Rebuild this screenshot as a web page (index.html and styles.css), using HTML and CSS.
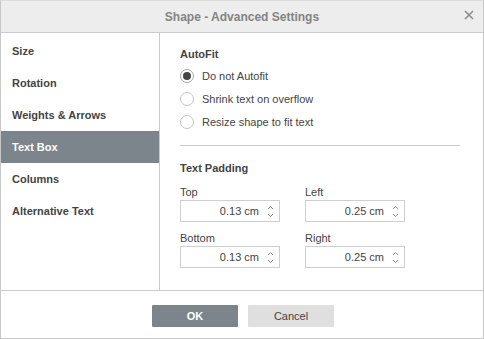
FILE: index.html
```html
<!DOCTYPE html>
<html lang="en">
<head>
  <meta charset="UTF-8">
  <title>Shape - Advanced Settings</title>
  <link rel="stylesheet" href="styles.css">
</head>
<body>
  <div class="dialog">
    <div class="header">
      <span class="title">Shape - Advanced Settings</span>
      <button class="close-button" title="Close">
        <svg width="10" height="10" viewBox="0 0 10 10"><path d="M1 1L9 9M9 1L1 9" stroke="#888" stroke-width="1.5"/></svg>
      </button>
    </div>

    <div class="body">
      <ul class="menu">
        <li>Size</li>
        <li>Rotation</li>
        <li>Weights &amp; Arrows</li>
        <li class="active">Text Box</li>
        <li>Columns</li>
        <li>Alternative Text</li>
      </ul>

      <div class="panel">
        <div class="section-title">AutoFit</div>
        <div class="radios">
          <label class="radio checked"><span class="dot"></span>Do not Autofit</label>
          <label class="radio"><span class="dot"></span>Shrink text on overflow</label>
          <label class="radio"><span class="dot"></span>Resize shape to fit text</label>
        </div>

        <div class="separator"></div>

        <div class="section-title pad-title">Text Padding</div>
        <div class="fields">
          <div class="field">
            <div class="field-label">Top</div>
            <div class="spinner"><span class="value">0.13 cm</span><span class="arrows"><svg width="7" height="14" viewBox="0 0 7 14"><path d="M1 5L3.5 2.5L6 5M1 10L3.5 12.5L6 10" fill="none" stroke="#888"/></svg></span></div>
          </div>
          <div class="field">
            <div class="field-label">Left</div>
            <div class="spinner"><span class="value">0.25 cm</span><span class="arrows"><svg width="7" height="14" viewBox="0 0 7 14"><path d="M1 5L3.5 2.5L6 5M1 10L3.5 12.5L6 10" fill="none" stroke="#888"/></svg></span></div>
          </div>
          <div class="field">
            <div class="field-label">Bottom</div>
            <div class="spinner"><span class="value">0.13 cm</span><span class="arrows"><svg width="7" height="14" viewBox="0 0 7 14"><path d="M1 5L3.5 2.5L6 5M1 10L3.5 12.5L6 10" fill="none" stroke="#888"/></svg></span></div>
          </div>
          <div class="field">
            <div class="field-label">Right</div>
            <div class="spinner"><span class="value">0.25 cm</span><span class="arrows"><svg width="7" height="14" viewBox="0 0 7 14"><path d="M1 5L3.5 2.5L6 5M1 10L3.5 12.5L6 10" fill="none" stroke="#888"/></svg></span></div>
          </div>
        </div>
      </div>
    </div>

    <div class="footer">
      <button class="btn primary">OK</button>
      <button class="btn">Cancel</button>
    </div>
  </div>
</body>
</html>
```

FILE: styles.css
```css
body {
  margin: 0;
  background: #fff;
  font-family: "Liberation Sans", Arial, sans-serif;
  font-size: 11px;
  color: #444;
}
.dialog {
  box-sizing: border-box;
  width: 484px;
  height: 339px;
  border: 1px solid #c8c8c8;
  border-top-color: #dcdcdc;
  display: flex;
  flex-direction: column;
  background: #fff;
}
.header {
  height: 31px;
  flex: none;
  background: #ededed;
  border-bottom: 1px solid #cbcbcb;
  display: flex;
  align-items: center;
  justify-content: center;
  position: relative;
}
.title {
  font-size: 12px;
  font-weight: bold;
  color: #848484;
}
.close-button {
  position: absolute;
  right: 9px;
  top: 9px;
  width: 10px;
  height: 10px;
  padding: 0;
  border: none;
  background: none;
  display: flex;
}
.body {
  height: 257px;
  flex: none;
  display: flex;
}
.menu {
  list-style: none;
  margin: 0;
  padding: 2px 0 0;
  width: 158px;
  border-right: 1px solid #cbcbcb;
  flex: none;
}
.menu li {
  height: 32px;
  line-height: 32px;
  padding-left: 11px;
  font-weight: bold;
}
.menu li.active {
  background: #7d858c;
  color: #fff;
}
.panel {
  flex: 1;
  padding: 14px 20px 0;
}
.section-title {
  font-weight: bold;
  line-height: 14px;
}
.radios {
  margin-top: 3px;
}
.radio {
  display: flex;
  align-items: center;
  height: 23px;
}
.dot {
  box-sizing: border-box;
  width: 14px;
  height: 14px;
  border: 1px solid #c4c4c4;
  border-radius: 50%;
  margin-right: 8px;
  display: flex;
  align-items: center;
  justify-content: center;
}
.radio.checked .dot {
  border-color: #a8a8a8;
}
.radio.checked .dot::after {
  content: "";
  width: 8px;
  height: 8px;
  border-radius: 50%;
  background: #444;
}
.separator {
  margin-top: 12px;
  width: 280px;
  border-top: 1px solid #cbcbcb;
}
.pad-title {
  margin-top: 15px;
}
.fields {
  margin-top: 10px;
  display: grid;
  grid-template-columns: 100px 100px;
  column-gap: 25px;
  row-gap: 9px;
}
.field-label {
  line-height: 14px;
  margin-bottom: 1px;
}
.spinner {
  box-sizing: border-box;
  height: 22px;
  border: 1px solid #cfcfcf;
  display: flex;
  align-items: center;
  justify-content: flex-end;
}
.value {
  margin-right: 8px;
}
.arrows {
  display: flex;
  margin-right: 5px;
}
.footer {
  flex: 1;
  border-top: 1px solid #cbcbcb;
  display: flex;
  justify-content: center;
  align-items: flex-start;
  gap: 10px;
  padding: 14px 0 0 2px;
}
.btn {
  width: 86px;
  height: 22px;
  border: none;
  border-radius: 1px;
  background: #dfdfdf;
  color: #444;
  font-family: "Liberation Sans", Arial, sans-serif;
  font-size: 11px;
  padding: 0;
}
.btn.primary {
  background: #7d858c;
  color: #fff;
  font-weight: bold;
}
```
